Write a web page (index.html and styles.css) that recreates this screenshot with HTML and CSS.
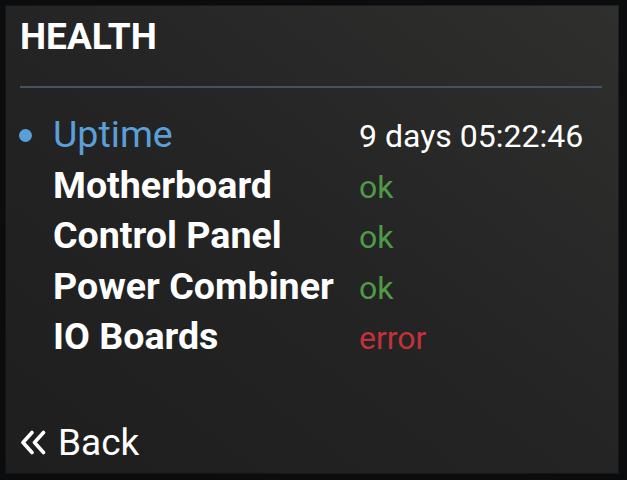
FILE: index.html
```html
<!DOCTYPE html>
<html lang="en">
<head>
  <meta charset="UTF-8" />
  <meta name="viewport" content="width=device-width, initial-scale=1.0" />
  <title>Health</title>
  <link rel="stylesheet" href="styles.css">
</head>
<body>
  <div class="screen">
    <h1 class="title">HEALTH</h1>
    <hr class="divider">

    <ul class="health-list">
      <li class="row active">
        <span class="bullet"></span>
        <span class="label">Uptime</span>
        <span class="value">9 days 05:22:46</span>
      </li>
      <li class="row">
        <span class="bullet"></span>
        <span class="label">Motherboard</span>
        <span class="value ok">ok</span>
      </li>
      <li class="row">
        <span class="bullet"></span>
        <span class="label">Control Panel</span>
        <span class="value ok">ok</span>
      </li>
      <li class="row">
        <span class="bullet"></span>
        <span class="label">Power Combiner</span>
        <span class="value ok">ok</span>
      </li>
      <li class="row">
        <span class="bullet"></span>
        <span class="label">IO Boards</span>
        <span class="value error">error</span>
      </li>
    </ul>

    <div class="back">
      <svg class="back-icon" width="27" height="25" viewBox="0 0 27 25">
        <path d="M12 2.5 L3 12.5 L12 22.5 M23.5 2.5 L14.5 12.5 L23.5 22.5" fill="none" stroke="#fff" stroke-width="3.6" stroke-linecap="round" stroke-linejoin="round"/>
      </svg>
      <span>Back</span>
    </div>
  </div>
</body>
</html>
```

FILE: styles.css
```css
:root {
  --frame: #0b0c0e;
  --text: #ffffff;
  --accent: #5b9fd9;
  --ok: #4f9a46;
  --error: #c3313a;
  --line: #435365;
}

* {
  box-sizing: border-box;
}

body {
  margin: 0;
  width: 627px;
  height: 480px;
  background: var(--frame);
  font-family: 'Roboto', 'Liberation Sans', sans-serif;
  color: var(--text);
  padding: 5px 8px 6px 5px;
  overflow: hidden;
}

.screen {
  height: 100%;
  display: flex;
  flex-direction: column;
  padding: 13px 17px 13px 15px;
  background: linear-gradient(to top right, #1e1e1e 0%, #242424 50%, #2f2f2e 100%);
  box-shadow: inset 0 0 0 1px rgba(0, 0, 0, 0.35);
}

.title {
  margin: 0;
  font-size: 37px;
  font-weight: 700;
  line-height: 38px;
}

.divider {
  margin: 30px 0 21px;
  border: none;
  height: 2px;
  background: var(--line);
}

.health-list {
  list-style: none;
  margin: 0;
  padding: 0;
}

.row {
  display: grid;
  grid-template-columns: 34px 305px auto;
  align-items: baseline;
  height: 50.5px;
  line-height: 50.5px;
}

.bullet {
  width: 13px;
  height: 13px;
  border-radius: 50%;
  align-self: center;
  visibility: hidden;
  margin-left: -1px;
}

.row.active .bullet {
  visibility: visible;
  background: var(--accent);
}

.label {
  font-size: 37.6px;
  font-weight: 700;
  margin-left: -1px;
}

.row.active .label {
  font-weight: 400;
  color: var(--accent);
}

.value {
  font-size: 32px;
}

.value.ok {
  color: var(--ok);
}

.value.error {
  color: var(--error);
}

.back {
  margin-top: auto;
  display: flex;
  align-items: center;
  gap: 11px;
  font-size: 37px;
  line-height: 1;
}

.back-icon {
  flex: none;
}
```
